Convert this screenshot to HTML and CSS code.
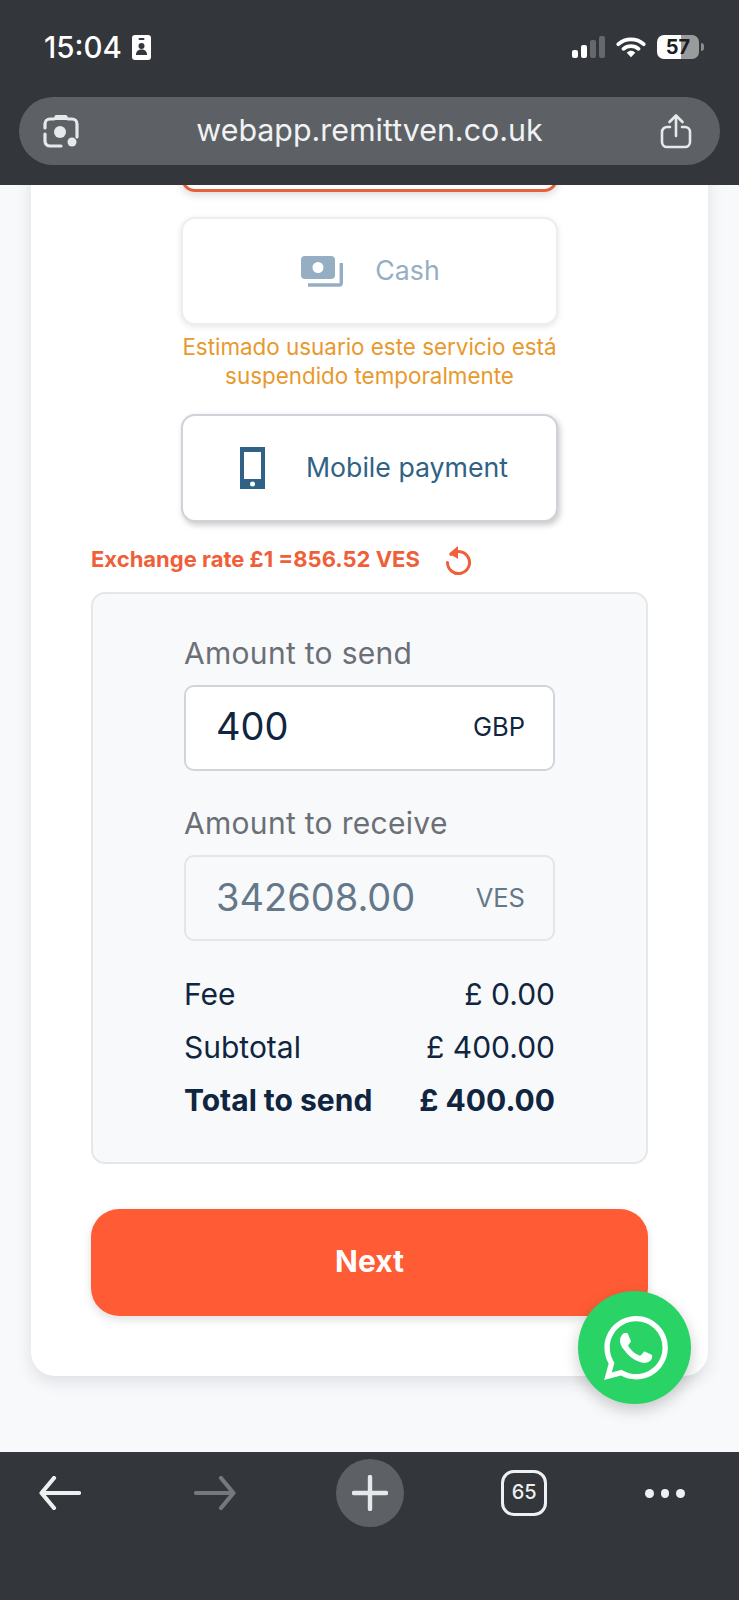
FILE: index.html
```html
<!DOCTYPE html>
<html lang="en">
<head>
    <meta charset="UTF-8">
    <meta name="viewport" content="width=device-width, initial-scale=1.0">
    <title>Remittven</title>
    <link rel="stylesheet" href="styles.css">
</head>
<body>

    <!-- Browser chrome, top -->
    <header class="top-bar">
        <div class="status-row">
            <div class="status-left">
                <span class="clock">15:04</span>
                <svg class="badge-icon" viewBox="0 0 19 25"><rect width="19" height="25" rx="3" fill="#fff"/><rect x="6.500" y="3" width="6" height="2" rx="1" fill="#33363a"/><circle cx="9.500" cy="11" r="3" fill="#33363a"/><path d="M4 20c0-4 2.500-5.500 5.500-5.500S15 16 15 20z" fill="#33363a"/></svg>
            </div>
            <div class="status-right">
                <div class="signal">
                    <span class="bar bar-1"></span>
                    <span class="bar bar-2"></span>
                    <span class="bar bar-3"></span>
                    <span class="bar bar-4"></span>
                </div>
                <svg class="wifi-icon" viewBox="0 0 32 23"><path d="M2.500 8.500C10 1.500 22 1.500 29.500 8.500M8 13.500C12.500 9.500 19.500 9.500 24 13.500" fill="none" stroke="#fff" stroke-width="4" stroke-linecap="round"/><path d="M11.500 17.500C14.500 15 17.500 15 20.500 17.500L16 22.500z" fill="#fff"/></svg>
                <div class="battery">
                    <span class="battery-level">57</span>
                    <span class="battery-nub"></span>
                </div>
            </div>
        </div>
        <div class="url-bar">
            <svg class="lens-icon" viewBox="0 0 36 36"><path d="M2 15v-4a5 5 0 0 1 5-5h4M25 6h4a5 5 0 0 1 5 5v13M2 21v7a5 5 0 0 0 5 5h11" fill="none" stroke="#e6e8ea" stroke-width="3.200" stroke-linecap="round"/><path d="M10 7l2-4.500a1.500 1.500 0 0 1 1-.5h10a1.500 1.500 0 0 1 1 .5L26 7z" fill="#e6e8ea"/><circle cx="17" cy="19" r="6" fill="#e6e8ea"/><circle cx="29" cy="29" r="4.500" fill="#e6e8ea"/></svg>
            <span class="url-text">webapp.remittven.co.uk</span>
            <svg class="share-icon" viewBox="0 0 32 36"><path d="M10 14H7a5 5 0 0 0-5 5v10a5 5 0 0 0 5 5h18a5 5 0 0 0 5-5V19a5 5 0 0 0-5-5h-3M16 23V3M9.500 9L16 2.500 22.500 9" fill="none" stroke="#e6e8ea" stroke-width="2.600" stroke-linecap="round" stroke-linejoin="round"/></svg>
        </div>
    </header>

    <main class="page">
        <div class="card">
            <div class="option option-selected"></div>

            <div class="option option-disabled">
                <svg class="cash-icon" viewBox="0 0 42 31"><rect x="0" y="0" width="34" height="23" rx="4" fill="#95aec3"/><circle cx="17" cy="11.500" r="5.500" fill="#fff"/><path d="M40.300 7v20a2 2 0 0 1-2 2H7" fill="none" stroke="#95aec3" stroke-width="3.400"/></svg>
                <span class="option-label">Cash</span>
            </div>
            <p class="notice">Estimado usuario este servicio está<br>suspendido temporalmente</p>

            <div class="option option-active">
                <svg class="mobile-icon" viewBox="0 0 25 42"><path d="M0 0h25v42H0z" fill="#2f6285"/><rect x="4" y="5" width="17" height="27" fill="#fff"/><circle cx="12.500" cy="37" r="2.500" fill="#fff"/></svg>
                <span class="option-label">Mobile payment</span>
            </div>

            <div class="rate-row">
                <span class="rate-text">Exchange rate £1 =856.52 VES</span>
                <svg class="refresh-icon" viewBox="0 0 26 30"><path d="M6 8.500a11 11 0 1 1-3.500 8" fill="none" stroke="#ef5f3a" stroke-width="3" stroke-linecap="round"/><path d="M13 0v13L4 7.500z" fill="#ef5f3a"/></svg>
            </div>

            <section class="panel">
                <label class="field-label">Amount to send</label>
                <div class="amount-box">
                    <span class="amount-value">400</span>
                    <span class="amount-currency">GBP</span>
                </div>

                <label class="field-label label-second">Amount to receive</label>
                <div class="amount-box amount-box-readonly">
                    <span class="amount-value">342608.00</span>
                    <span class="amount-currency">VES</span>
                </div>

                <div class="summary">
                    <div class="summary-row"><span>Fee</span><span>£ 0.00</span></div>
                    <div class="summary-row"><span>Subtotal</span><span>£ 400.00</span></div>
                    <div class="summary-row summary-total"><span>Total to send</span><span>£ 400.00</span></div>
                </div>
            </section>

            <button class="next-button">Next</button>
        </div>

        <!-- Floating chat button -->
        <div class="whatsapp-button">
            <svg viewBox="0 0 24 24"><path fill="#fff" d="M17.472 14.382c-.297-.149-1.758-.867-2.030-.967-.273-.099-.471-.148-.670.150-.197.297-.767.966-.940 1.164-.173.199-.347.223-.644.075-.297-.150-1.255-.463-2.390-1.475-.883-.788-1.480-1.761-1.653-2.059-.173-.297-.018-.458.130-.606.134-.133.298-.347.446-.520.149-.174.198-.298.298-.497.099-.198.050-.371-.025-.520-.075-.149-.669-1.612-.916-2.207-.242-.579-.487-.500-.669-.510-.173-.008-.371-.010-.570-.010-.198 0-.520.074-.792.372-.272.297-1.040 1.016-1.040 2.479 0 1.462 1.065 2.875 1.213 3.074.149.198 2.096 3.200 5.077 4.487.709.306 1.262.489 1.694.625.712.227 1.360.195 1.871.118.571-.085 1.758-.719 2.006-1.413.248-.694.248-1.289.173-1.413-.074-.124-.272-.198-.570-.347m-5.421 7.403h-.004a9.870 9.870 0 01-5.031-1.378l-.361-.214-3.741.982.998-3.648-.235-.374a9.860 9.860 0 01-1.510-5.260c.001-5.450 4.436-9.884 9.888-9.884 2.640 0 5.122 1.030 6.988 2.898a9.825 9.825 0 012.893 6.994c-.003 5.450-4.437 9.884-9.885 9.884m8.413-18.297A11.815 11.815 0 0012.050 0C5.495 0 .160 5.335.157 11.892c0 2.096.547 4.142 1.588 5.945L.057 24l6.305-1.654a11.882 11.882 0 005.683 1.448h.005c6.554 0 11.890-5.335 11.893-11.893a11.821 11.821 0 00-3.480-8.413z"/></svg>
        </div>
    </main>

    <!-- Browser chrome, bottom -->
    <footer class="bottom-bar">
        <div class="nav-item">
            <svg class="arrow-icon" viewBox="0 0 42 34"><path d="M40 17H3M15 2L2.500 17 15 32" fill="none" stroke="#eef0f2" stroke-width="4.200" stroke-linecap="round" stroke-linejoin="round"/></svg>
        </div>
        <div class="nav-item">
            <svg class="arrow-icon" viewBox="0 0 42 34"><path d="M2 17h37M27 2l12.500 15L27 32" fill="none" stroke="#76797c" stroke-width="4.200" stroke-linecap="round" stroke-linejoin="round"/></svg>
        </div>
        <div class="nav-item plus-circle">
            <svg class="plus-icon" viewBox="0 0 36 36"><path d="M18 2v32M2 18h32" fill="none" stroke="#e6e8ea" stroke-width="4.400" stroke-linecap="round"/></svg>
        </div>
        <div class="nav-item">
            <span class="tab-count">65</span>
        </div>
        <div class="nav-item dots">
            <span class="dot"></span>
            <span class="dot"></span>
            <span class="dot"></span>
        </div>
    </footer>

</body>
</html>
```

FILE: styles.css
```css
/* General Layout Styles */
body {
    font-family: 'Inter', 'Liberation Sans', sans-serif;
    background-color: #f8f9fb;
    margin: 0;
    width: 739px;
    height: 1600px;
    display: flex;
    flex-direction: column;
    overflow: hidden;
    color: #0f2540;
}

/* Top browser bar */
.top-bar {
    background-color: #33363a;
    height: 185px;
    flex-shrink: 0;
    position: relative;
    z-index: 2;
}

.status-row {
    height: 94px;
    padding: 0 35px 0 44px;
    margin-bottom: 3px;
    display: flex;
    justify-content: space-between;
    align-items: center;
}

.status-left {
    display: flex;
    align-items: center;
    gap: 10px;
}

.clock {
    color: #fff;
    font-size: 29.500px;
    font-weight: 500;
}

.badge-icon {
    width: 19px;
    height: 25px;
}

.status-right {
    display: flex;
    align-items: center;
    gap: 11px;
}

.signal {
    display: flex;
    align-items: flex-end;
    gap: 3px;
    height: 22px;
}

.bar {
    width: 6px;
    border-radius: 2px;
    background-color: #fff;
}

.bar-1 { height: 8px; }
.bar-2 { height: 13px; }
.bar-3 { height: 18px; background-color: #66696c; }
.bar-4 { height: 22px; background-color: #66696c; }

.wifi-icon {
    width: 30px;
    height: 22px;
}

.battery {
    display: flex;
    align-items: center;
    gap: 2px;
}

.battery-level {
    width: 42px;
    height: 24px;
    border-radius: 7px;
    background: linear-gradient(to right, #fff 58%, #9a9b9d 58%);
    color: #1c1d1f;
    font-size: 20px;
    font-weight: 700;
    line-height: 24px;
    text-align: center;
}

.battery-nub {
    width: 3px;
    height: 8px;
    border-radius: 0 3px 3px 0;
    background-color: #8b8d90;
}

.url-bar {
    margin: 0 19px;
    height: 68px;
    border-radius: 34px;
    background-color: #5d6166;
    display: flex;
    align-items: center;
    justify-content: space-between;
    padding: 0 28px 0 24px;
}

.url-text {
    color: #f1f2f3;
    font-size: 30.400px;
    padding-bottom: 2px;
}

.lens-icon {
    width: 36px;
    height: 36px;
}

.share-icon {
    width: 32px;
    height: 36px;
}

/* Page and card */
.page {
    flex: 1;
    min-height: 0;
    position: relative;
    overflow: hidden;
}

.card {
    margin: -121px 0 0 31px;
    width: 677px;
    box-sizing: border-box;
    padding: 20px 60px 60px;
    background-color: #fff;
    border-radius: 24px;
    box-shadow: 0 6px 16px rgba(30, 40, 60, 0.12);
}

/* Payment options */
.option {
    width: 377px;
    height: 108px;
    box-sizing: border-box;
    margin: 0 auto;
    border-radius: 14px;
    background-color: #fff;
    display: flex;
    align-items: center;
    justify-content: center;
    gap: 32px;
}

.option-selected {
    border: 3px solid #e8603a;
    box-shadow: 0 3px 8px rgba(0, 0, 0, 0.15);
    margin-bottom: 25px;
}

.option-disabled {
    border: 2px solid #eceef1;
    box-shadow: 0 2px 6px rgba(0, 0, 0, 0.1);
    color: #95aec3;
    padding-left: 2px;
}

.option-active {
    border: 2px solid #cfd2d8;
    box-shadow: 2px 3px 6px rgba(0, 0, 0, 0.22);
    color: #2f6285;
    gap: 41px;
    padding-left: 9px;
}

.option-label {
    font-size: 26.700px;
    padding-bottom: 3px;
}

.cash-icon {
    width: 42px;
    height: 31px;
}

.mobile-icon {
    width: 25px;
    height: 42px;
}

.notice {
    margin: 7px 0 24px;
    color: #e8992e;
    font-size: 22.400px;
    line-height: 29px;
    text-align: center;
}

/* Exchange rate */
.rate-row {
    margin: 22px 0 18px;
    display: flex;
    align-items: center;
    gap: 25px;
    height: 30px;
}

.rate-text {
    color: #ef5f3a;
    font-size: 22px;
    font-weight: 700;
}

.refresh-icon {
    width: 26px;
    height: 30px;
    margin-top: 4px;
}

/* Amount panel */
.panel {
    box-sizing: border-box;
    height: 572px;
    padding: 41px 91px 0;
    background-color: #f8f9fb;
    border: 2px solid #e5e7eb;
    border-radius: 14px;
}

.field-label {
    display: block;
    color: #6b6f76;
    font-size: 30px;
    letter-spacing: 0.3px;
    line-height: 36px;
    margin-bottom: 14px;
}

.label-second {
    margin-top: 34px;
}

.amount-box {
    height: 86px;
    box-sizing: border-box;
    padding: 0 28px 4px 30px;
    border: 2px solid #d1d5db;
    border-radius: 10px;
    background-color: #fff;
    display: flex;
    align-items: center;
    justify-content: space-between;
}

.amount-box-readonly {
    background-color: #f8f9fb;
    border-color: #e3e5e9;
    color: #64788a;
    padding-bottom: 2px;
}

.amount-value {
    font-size: 38px;
}

.amount-currency {
    font-size: 25.500px;
}

.summary {
    margin-top: 27px;
}

.summary-row {
    display: flex;
    justify-content: space-between;
    font-size: 30px;
    line-height: 53px;
}

.summary-total {
    font-weight: 700;
}

/* Next button */
.next-button {
    display: block;
    width: 100%;
    height: 107px;
    margin-top: 45px;
    padding-bottom: 5px;
    border: none;
    border-radius: 28px;
    background-color: #ff5c35;
    color: #fff;
    font-family: inherit;
    font-size: 30px;
    font-weight: 700;
    box-shadow: 0 4px 10px rgba(0, 0, 0, 0.12);
}

/* WhatsApp button */
.whatsapp-button {
    position: absolute;
    left: 578px;
    top: 1106px;
    width: 113px;
    height: 113px;
    border-radius: 50%;
    background-color: #2ad366;
    box-shadow: 0 6px 16px rgba(0, 0, 0, 0.2);
    display: flex;
    align-items: center;
    justify-content: center;
}

.whatsapp-button svg {
    width: 64px;
    height: 64px;
    margin-left: 3px;
}

/* Bottom browser bar */
.bottom-bar {
    height: 148px;
    flex-shrink: 0;
    box-sizing: border-box;
    padding: 7px 54px 0 26px;
    background-color: #33363a;
    display: flex;
    justify-content: space-between;
    align-items: flex-start;
}

.nav-item {
    width: 68px;
    height: 68px;
    display: flex;
    align-items: center;
    justify-content: center;
}

.arrow-icon {
    width: 42px;
    height: 34px;
}

.plus-circle {
    border-radius: 50%;
    background-color: #5d6166;
}

.plus-icon {
    width: 36px;
    height: 36px;
}

.tab-count {
    width: 46px;
    height: 46px;
    box-sizing: border-box;
    border: 3.500px solid #eef0f2;
    border-radius: 13px;
    color: #eef0f2;
    font-size: 20px;
    font-weight: 500;
    line-height: 39px;
    text-align: center;
}

.dots {
    width: 40px;
    gap: 7px;
}

.dot {
    width: 9px;
    height: 9px;
    border-radius: 50%;
    background-color: #eef0f2;
}
```
